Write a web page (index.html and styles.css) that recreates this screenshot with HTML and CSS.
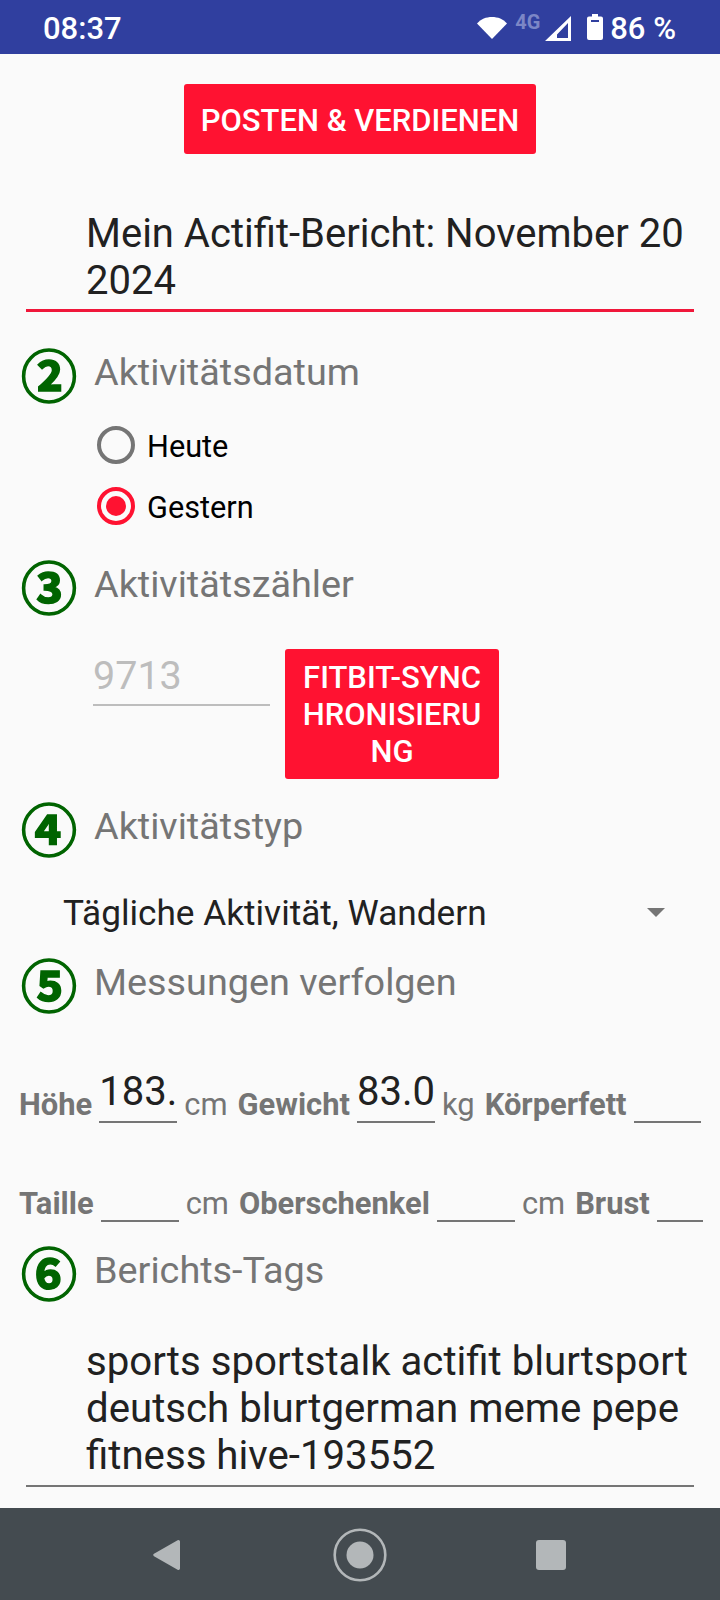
FILE: index.html
```html
<!DOCTYPE html>
<html lang="de">
<head>
<meta charset="utf-8">
<title>Actifit</title>
<link rel="stylesheet" href="styles.css">
</head>
<body>
<div class="screen">
  <header class="status">
    <span class="time">08:37</span>
    <div class="status-right">
      <svg class="i-wifi" width="30" height="24" viewBox="0 0 30 24"><path d="M0 7.500C4 3 9 1 15 1s11 2 15 6.500L15 23z" fill="#fff"/></svg>
      <span class="net">4G</span>
      <svg class="i-signal" width="26" height="25" viewBox="0 0 26 25"><path fill-rule="evenodd" d="M26 0v25H0zM23 7L12 18.500V22h11z" fill="#fff"/><path d="M12 18.500L2 25h10z" fill="#fff"/></svg>
      <svg class="i-batt" width="16" height="26" viewBox="0 0 16 26"><path fill-rule="evenodd" d="M5 0h6v2.500h3a2 2 0 0 1 2 2V24a2 2 0 0 1-2 2H2a2 2 0 0 1-2-2V4.500a2 2 0 0 1 2-2h3zM4 6v2h8V6z" fill="#fff"/></svg>
      <span class="pct">86 %</span>
    </div>
  </header>

  <main class="content">
    <div class="post-row"><button class="btn btn-post">POSTEN &amp; VERDIENEN</button></div>
    <div class="textfield title-field">Mein Actifit-Bericht: November 20<br>2024</div>

    <div class="head head-2"><span class="num">②</span><span class="head-text">Aktivitätsdatum</span></div>
    <div class="radios">
      <div class="radio-row"><span class="radio"></span><span class="radio-label">Heute</span></div>
      <div class="radio-row"><span class="radio radio-on"></span><span class="radio-label">Gestern</span></div>
    </div>

    <div class="head head-3"><span class="num">③</span><span class="head-text">Aktivitätszähler</span></div>
    <div class="counter-row">
      <div class="counter">9713</div>
      <button class="btn btn-sync">FITBIT-SYNC<br>HRONISIERU<br>NG</button>
    </div>

    <div class="head head-4"><span class="num">④</span><span class="head-text">Aktivitätstyp</span></div>
    <div class="spinner"><span>Tägliche Aktivität, Wandern</span><span class="arrow"></span></div>

    <div class="head head-5"><span class="num">⑤</span><span class="head-text">Messungen verfolgen</span></div>
    <div class="measure measure-1">
      <b class="m-label">Höhe</b><span class="m-field w78">183.</span><span class="m-unit">cm</span>
      <b class="m-label">Gewicht</b><span class="m-field w78">83.0</span><span class="m-unit">kg</span>
      <b class="m-label">Körperfett</b><span class="m-field w67"></span>
    </div>
    <div class="measure measure-2">
      <b class="m-label">Taille</b><span class="m-field w78"></span><span class="m-unit">cm</span>
      <b class="m-label">Oberschenkel</b><span class="m-field w78"></span><span class="m-unit">cm</span>
      <b class="m-label">Brust</b><span class="m-field w46"></span>
    </div>

    <div class="head head-6"><span class="num">⑥</span><span class="head-text">Berichts-Tags</span></div>
    <div class="textfield tags-field">sports sportstalk actifit blurtsport<br>deutsch blurtgerman meme pepe<br>fitness hive-193552</div>
  </main>

  <nav class="navbar">
    <svg width="28" height="32" viewBox="0 0 28 32"><path d="M27 2.500V29.500a1.500 1.500 0 0 1-2.400 1.200L1 17.200a1.500 1.500 0 0 1 0-2.400L24.600 1.300A1.500 1.500 0 0 1 27 2.500z" fill="#b3b7b9"/></svg>
    <svg class="nav-home" width="54" height="54" viewBox="0 0 54 54"><circle cx="27" cy="27" r="25.300" fill="none" stroke="#b3b7b9" stroke-width="2.600"/><circle cx="27" cy="27" r="13.500" fill="#b3b7b9"/></svg>
    <svg class="nav-square" width="30" height="30" viewBox="0 0 30 30"><rect width="30" height="30" rx="3" fill="#b3b7b9"/></svg>
  </nav>
</div>
</body>
</html>
```
FILE: styles.css
```css
* { box-sizing: border-box; }
html, body { margin: 0; padding: 0; }
body { font-family: Roboto, "Liberation Sans", sans-serif; background: #fafafa; }
.screen { width: 720px; height: 1600px; display: flex; flex-direction: column; overflow: hidden; }

.status { height: 54px; background: #303f9f; color: #fff; display: flex; align-items: center; justify-content: space-between; padding: 0 44px 0 43px; flex: none; }
.time { font-size: 31px; font-weight: 500; padding-top: 3px; }
.status-right { display: flex; align-items: center; }
.i-wifi { margin-top: 2px; }
.net { font-size: 20px; font-weight: 700; color: #7c86c6; margin: -10px 0 0 8px; width: 30px; }
.i-signal { margin: 2px 0 0 0; }
.i-batt { margin: 0 0 0 16px; }
.pct { font-size: 31px; font-weight: 500; margin-left: 7px; padding-top: 3px; }

.content { flex: 1; display: flex; flex-direction: column; }
.post-row { display: flex; justify-content: center; margin-top: 30px; }
.btn { border: 0; border-radius: 3px; background: #ff1231; color: #fff; font-family: Roboto, sans-serif; font-weight: 500; font-size: 31px; padding: 0; }
.btn-post { width: 352px; height: 70px; padding-top: 2px; }

.textfield { margin: 0 26px; padding-left: 60px; font-size: 40px; line-height: 47px; color: #212121; white-space: nowrap; }
.title-field { margin-top: 55px; padding-top: 1px; border-bottom: 3px solid #f0173a; height: 103px; }
.tags-field { margin-top: 39px; font-size: 40.2px; border-bottom: 2px solid #757575; height: 149px; }

.head { display: flex; align-items: center; height: 56px; }
.head-2 { margin-top: 33px; }
.head-3 { margin-top: 21px; }
.head-4 { margin-top: 20px; }
.head-5 { margin-top: 10px; }
.head-6 { margin-top: 21px; }
.num { width: 94px; padding-left: 21px; font-family: "Noto Sans CJK JP", "DejaVu Sans", sans-serif; font-weight: 700; font-size: 56px; line-height: 56px; color: #006400; -webkit-text-stroke: 1.5px #006400; }
.head-text { font-size: 37.8px; color: #757575; margin-top: -2px; }

.radios { margin-top: 13px; padding-left: 97px; }
.radio-row { display: flex; align-items: center; height: 61px; font-size: 30.7px; color: #000; }
.radio-label { padding-top: 3px; }
.radio { width: 38px; height: 38px; border-radius: 50%; border: 4px solid #757575; margin-right: 12px; display: flex; align-items: center; justify-content: center; }
.radio-on { border-color: #ff1231; }
.radio-on::after { content: ""; width: 20px; height: 20px; border-radius: 50%; background: #ff1231; }

.counter-row { display: flex; margin-top: 36px; padding-left: 93px; }
.counter { width: 177px; height: 57px; border-bottom: 2px solid #bdbdbd; font-size: 39.5px; line-height: 54px; color: #bdbdbd; }
.btn-sync { width: 214px; height: 130px; margin-left: 15px; line-height: 37px; }

.spinner { display: flex; justify-content: space-between; align-items: center; height: 64px; margin-top: 26px; padding: 0 55px 0 63px; font-size: 35.2px; color: #212121; }
.arrow { width: 0; height: 0; border-left: 9px solid transparent; border-right: 9px solid transparent; border-top: 9px solid #757575; margin-top: -2px; }

.measure { display: flex; align-items: flex-end; padding-left: 19px; font-size: 30.9px; color: #757575; }
.measure-1 { margin-top: 62px; height: 50px; }
.measure-2 { margin-top: 49px; height: 50px; }
.m-label { font-weight: 700; line-height: 36px; }
.m-unit { font-weight: 400; line-height: 36px; margin: 0 10px 0 7px; }
.m-field { height: 50px; margin-left: 7px; border-bottom: 2px solid #757575; font-size: 40px; line-height: 38px; color: #212121; text-align: center; white-space: nowrap; flex: none; }
.w78 { width: 78px; }
.w67 { width: 67px; }
.w46 { width: 46px; }

.navbar { height: 92px; background: #444b50; flex: none; display: flex; align-items: center; padding-left: 153px; padding-top: 1px; }
.nav-home { margin-left: 152px; }
.nav-square { margin-left: 149px; }
```
